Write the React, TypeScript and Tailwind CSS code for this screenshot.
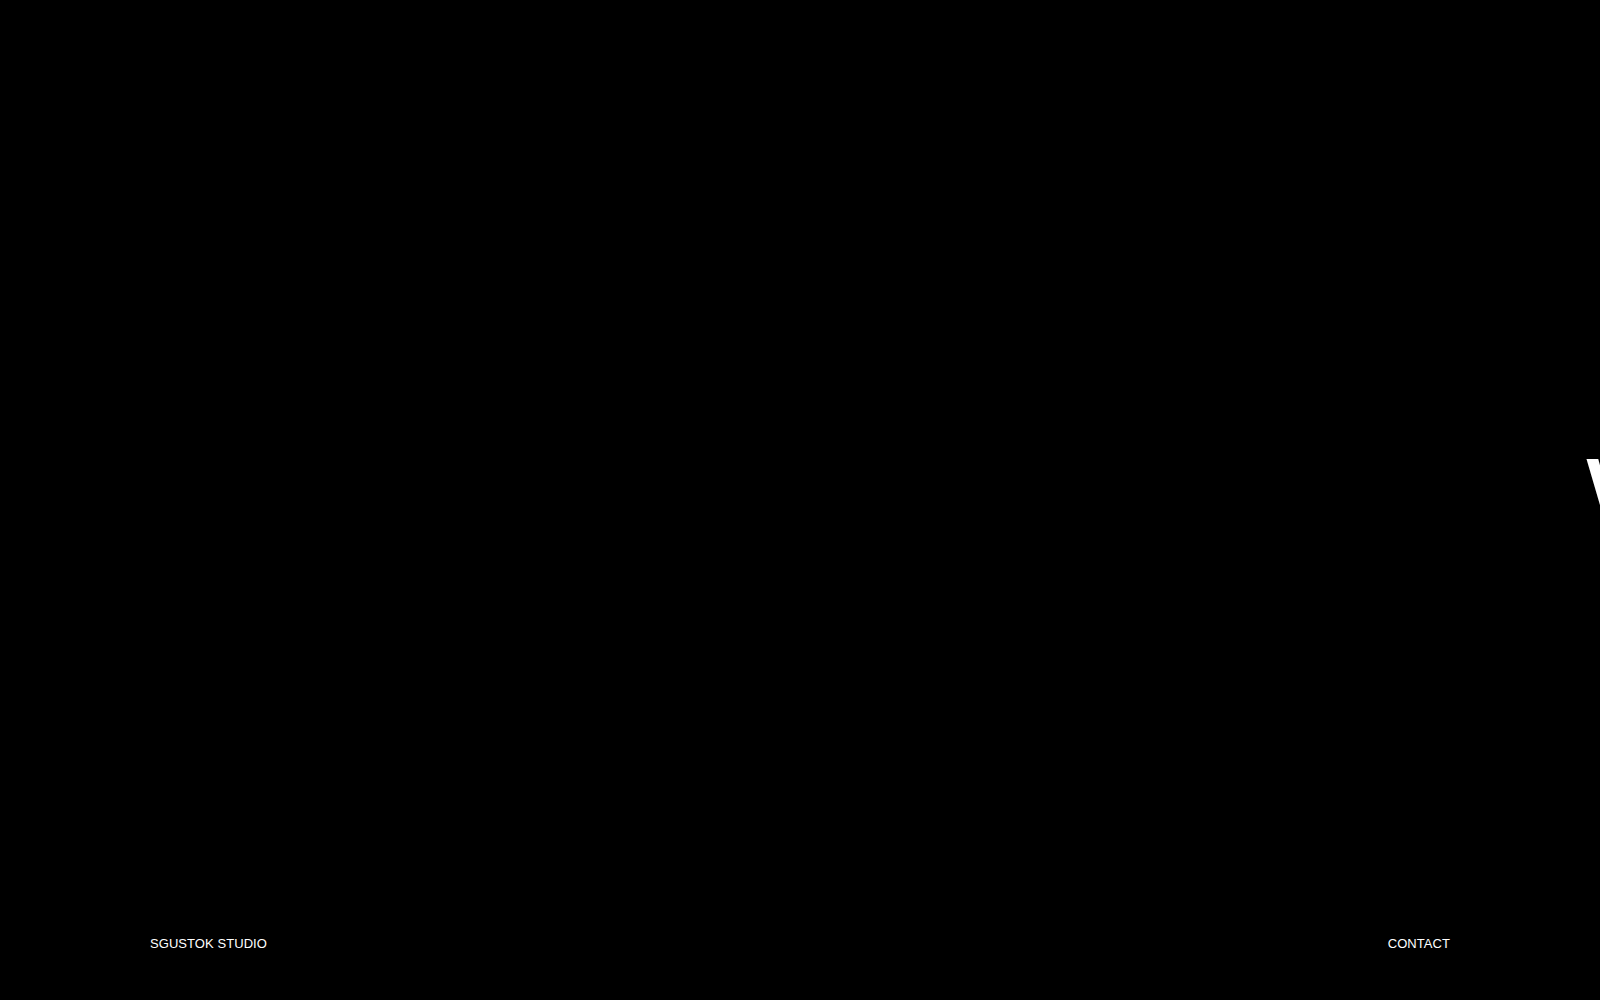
export default function App() {
  return (
    <div className="relative h-screen w-full overflow-hidden bg-black text-white [font-family:'Liberation_Sans',Arial,sans-serif]">
      <main className="flex h-full items-center overflow-hidden">
        <h1 className="whitespace-nowrap pl-[1586px] text-[120px] font-normal leading-none tracking-tight">
          We make things move
        </h1>
      </main>

      <footer className="absolute inset-x-0 bottom-0 flex items-end justify-between px-[150px] pb-[50px] text-[13px] leading-none tracking-[0.005em] uppercase">
        <span>Sgustok Studio</span>
        <a href="#" className="hover:opacity-70">Contact</a>
      </footer>
    </div>
  );
}
